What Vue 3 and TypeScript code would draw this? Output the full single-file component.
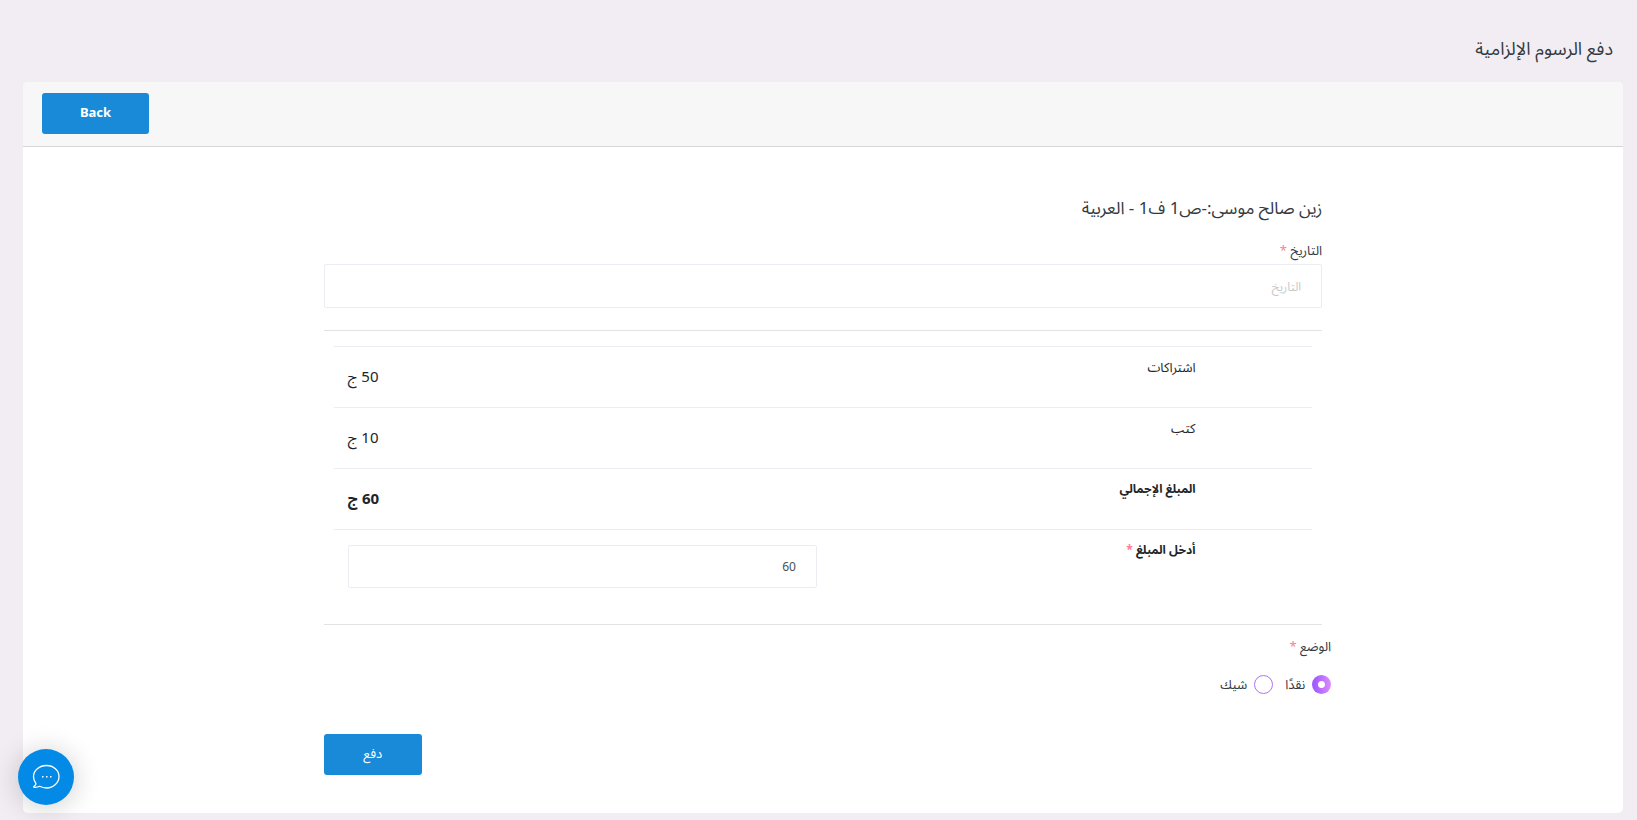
<script setup lang="ts">
import { ref } from 'vue'

interface Fee {
  name: string
  amount: string
  total?: boolean
}

const fees: Fee[] = [
  { name: 'اشتراكات', amount: '50 ج' },
  { name: 'كتب', amount: '10 ج' },
  { name: 'المبلغ الإجمالي', amount: '60 ج', total: true },
]

const modes = [
  { value: 'cash', label: 'نقدًا' },
  { value: 'cheque', label: 'شيك' },
]

const date = ref('')
const amount = ref('60')
const mode = ref('cash')
</script>

<template>
  <div class="page" dir="rtl">
    <h1 class="page-title">دفع الرسوم الإلزامية</h1>
    <main class="card">
      <header class="card-header">
        <button type="button" class="btn back">Back</button>
      </header>
      <form class="form" @submit.prevent>
        <h2 class="student">زين صالح موسى:-ص1 ف1 - العربية</h2>
        <label class="label" for="date">التاريخ <span class="required">*</span></label>
        <input id="date" v-model="date" class="input" type="text" placeholder="التاريخ" />
        <hr class="rule" />
        <div class="table-wrap">
          <table class="fees">
            <tbody>
              <tr v-for="fee in fees" :key="fee.name" :class="{ total: fee.total }">
                <td class="spacer"></td>
                <th class="name" scope="row">{{ fee.name }}</th>
                <td class="amount">{{ fee.amount }}</td>
              </tr>
              <tr class="total entry">
                <td class="spacer"></td>
                <th class="name" scope="row">
                  <label for="amount">أدخل المبلغ <span class="required">*</span></label>
                </th>
                <td class="amount">
                  <input id="amount" v-model="amount" class="input" type="text" inputmode="numeric" />
                </td>
              </tr>
            </tbody>
          </table>
        </div>
        <hr class="rule" />
        <fieldset class="modes">
          <legend class="label">الوضع <span class="required">*</span></legend>
          <div class="options">
            <label v-for="item in modes" :key="item.value" class="option">
              <input v-model="mode" class="radio" type="radio" name="mode" :value="item.value" />
              {{ item.label }}
            </label>
          </div>
        </fieldset>
        <div class="actions">
          <button type="submit" class="btn pay">دفع</button>
        </div>
      </form>
    </main>
    <button type="button" class="chat" aria-label="Chat">
      <svg width="28" height="26" viewBox="0 0 28 26" fill="none" aria-hidden="true">
        <path
          d="M14.500 1.500C21.500 1.500 27 6.400 27 12.500S21.500 24 14.500 24C12 24 9.700 23.400 7.700 22.300C6 23.200 4.200 23.500 2.300 23.300C1.600 23.200 1.600 22.700 2.100 22.300C3.500 21.300 4.300 20.200 3.700 19C2.300 17.100 1.500 15 1.500 12.500C1.500 6.400 7.500 1.500 14.500 1.500Z"
          stroke="#fff" stroke-width="1.300" stroke-linejoin="round"
        />
        <path d="M10 12h1.500v1.500H10zM14 12h1.500v1.500H14zM18 12h1.500v1.500H18z" fill="#fff" />
      </svg>
    </button>
  </div>
</template>

<style>
body {
  background: #f2edf3;
}
</style>

<style scoped>
* {
  box-sizing: border-box;
}
.page {
  min-height: 100vh;
  padding: 36px 14px 7px 23px;
  background: #f2edf3;
  color: #343a40;
  font-family: "Noto Sans", "Noto Sans Arabic", "DejaVu Sans", sans-serif;
  font-size: 13px;
  line-height: 20px;
}
.page-title {
  margin: 0 10px 22px;
  font-size: 18px;
  font-weight: 400;
  line-height: 24px;
}
.card {
  background: #fff;
  border-radius: 5px;
  overflow: hidden;
}
.card-header {
  display: flex;
  justify-content: flex-end;
  padding: 11px 19px 12px;
  background: #f7f7f7;
  border-bottom: 1px solid #d6d6d6;
}
.btn {
  height: 41px;
  padding: 0 0 3px;
  border: 0;
  border-radius: 3px;
  background: #198ad7;
  color: #fff;
  font-family: inherit;
  font-size: 13px;
  line-height: 20px;
  cursor: pointer;
}
.back {
  width: 107px;
  font-weight: 700;
}
.form {
  width: 62.4%;
  margin: 0 auto;
  padding: 49px 0 38px;
}
.student {
  margin: 0 0 20px;
  font-size: 17px;
  font-weight: 400;
  line-height: 24px;
}
.label {
  display: block;
  margin-bottom: 4px;
  padding: 0;
}
.required {
  color: #fe7c96;
}
.input {
  display: block;
  width: 100%;
  height: 44px;
  padding: 0 20px;
  border: 1px solid #ebedf2;
  border-radius: 2px;
  background: #fff;
  color: #495057;
  font-family: inherit;
  font-size: 12px;
}
.input::placeholder {
  color: #c9c8c8;
  opacity: 1;
}
.rule {
  height: 1px;
  margin: 22px 0 15px;
  border: 0;
  background: #e3e3e5;
}
.table-wrap {
  padding: 0 10px;
}
.fees {
  width: 100%;
  border-collapse: collapse;
  table-layout: fixed;
  color: #212529;
}
.fees tr {
  height: 61px;
}
.fees td,
.fees th {
  padding: 10px 14px 12px;
  border-top: 1px solid #ebedf2;
}
.fees .spacer {
  width: 10.5%;
}
.fees .name {
  width: 38.7%;
  font-weight: 400;
  text-align: right;
  vertical-align: top;
}
.fees .amount {
  font-size: 15px;
  text-align: left;
  vertical-align: middle;
}
.fees .total > * {
  font-weight: 700;
}
.fees .total .name {
  font-size: 12px;
}
.fees .entry .amount {
  padding: 15px 14px;
}
.fees .entry .input {
  height: 43px;
}
.table-wrap + .rule {
  margin: 21px 0 11px;
}
.modes {
  min-width: 0;
  margin: 0 -9px 40px;
  padding: 0;
  border: 0;
}
.options {
  display: flex;
  gap: 12px;
  margin-top: 14px;
}
.option {
  display: flex;
  align-items: center;
  gap: 7px;
}
.radio {
  appearance: none;
  width: 19px;
  height: 19px;
  margin: 0;
  border: 1px solid #b66dff;
  border-radius: 50%;
}
.radio:checked {
  border: 0;
  background: radial-gradient(circle, #fff 0 3px, transparent 4px),
    linear-gradient(to right, #9a55ff, #da8cff);
}
.actions {
  display: flex;
  justify-content: flex-end;
}
.pay {
  width: 98px;
}
.chat {
  position: fixed;
  bottom: 15px;
  left: 18px;
  display: flex;
  align-items: center;
  justify-content: center;
  width: 56px;
  height: 56px;
  padding: 0;
  border: 0;
  border-radius: 50%;
  background: #038ae6;
  box-shadow: 0 2px 28px rgba(0, 0, 0, 0.2);
  cursor: pointer;
}
</style>
